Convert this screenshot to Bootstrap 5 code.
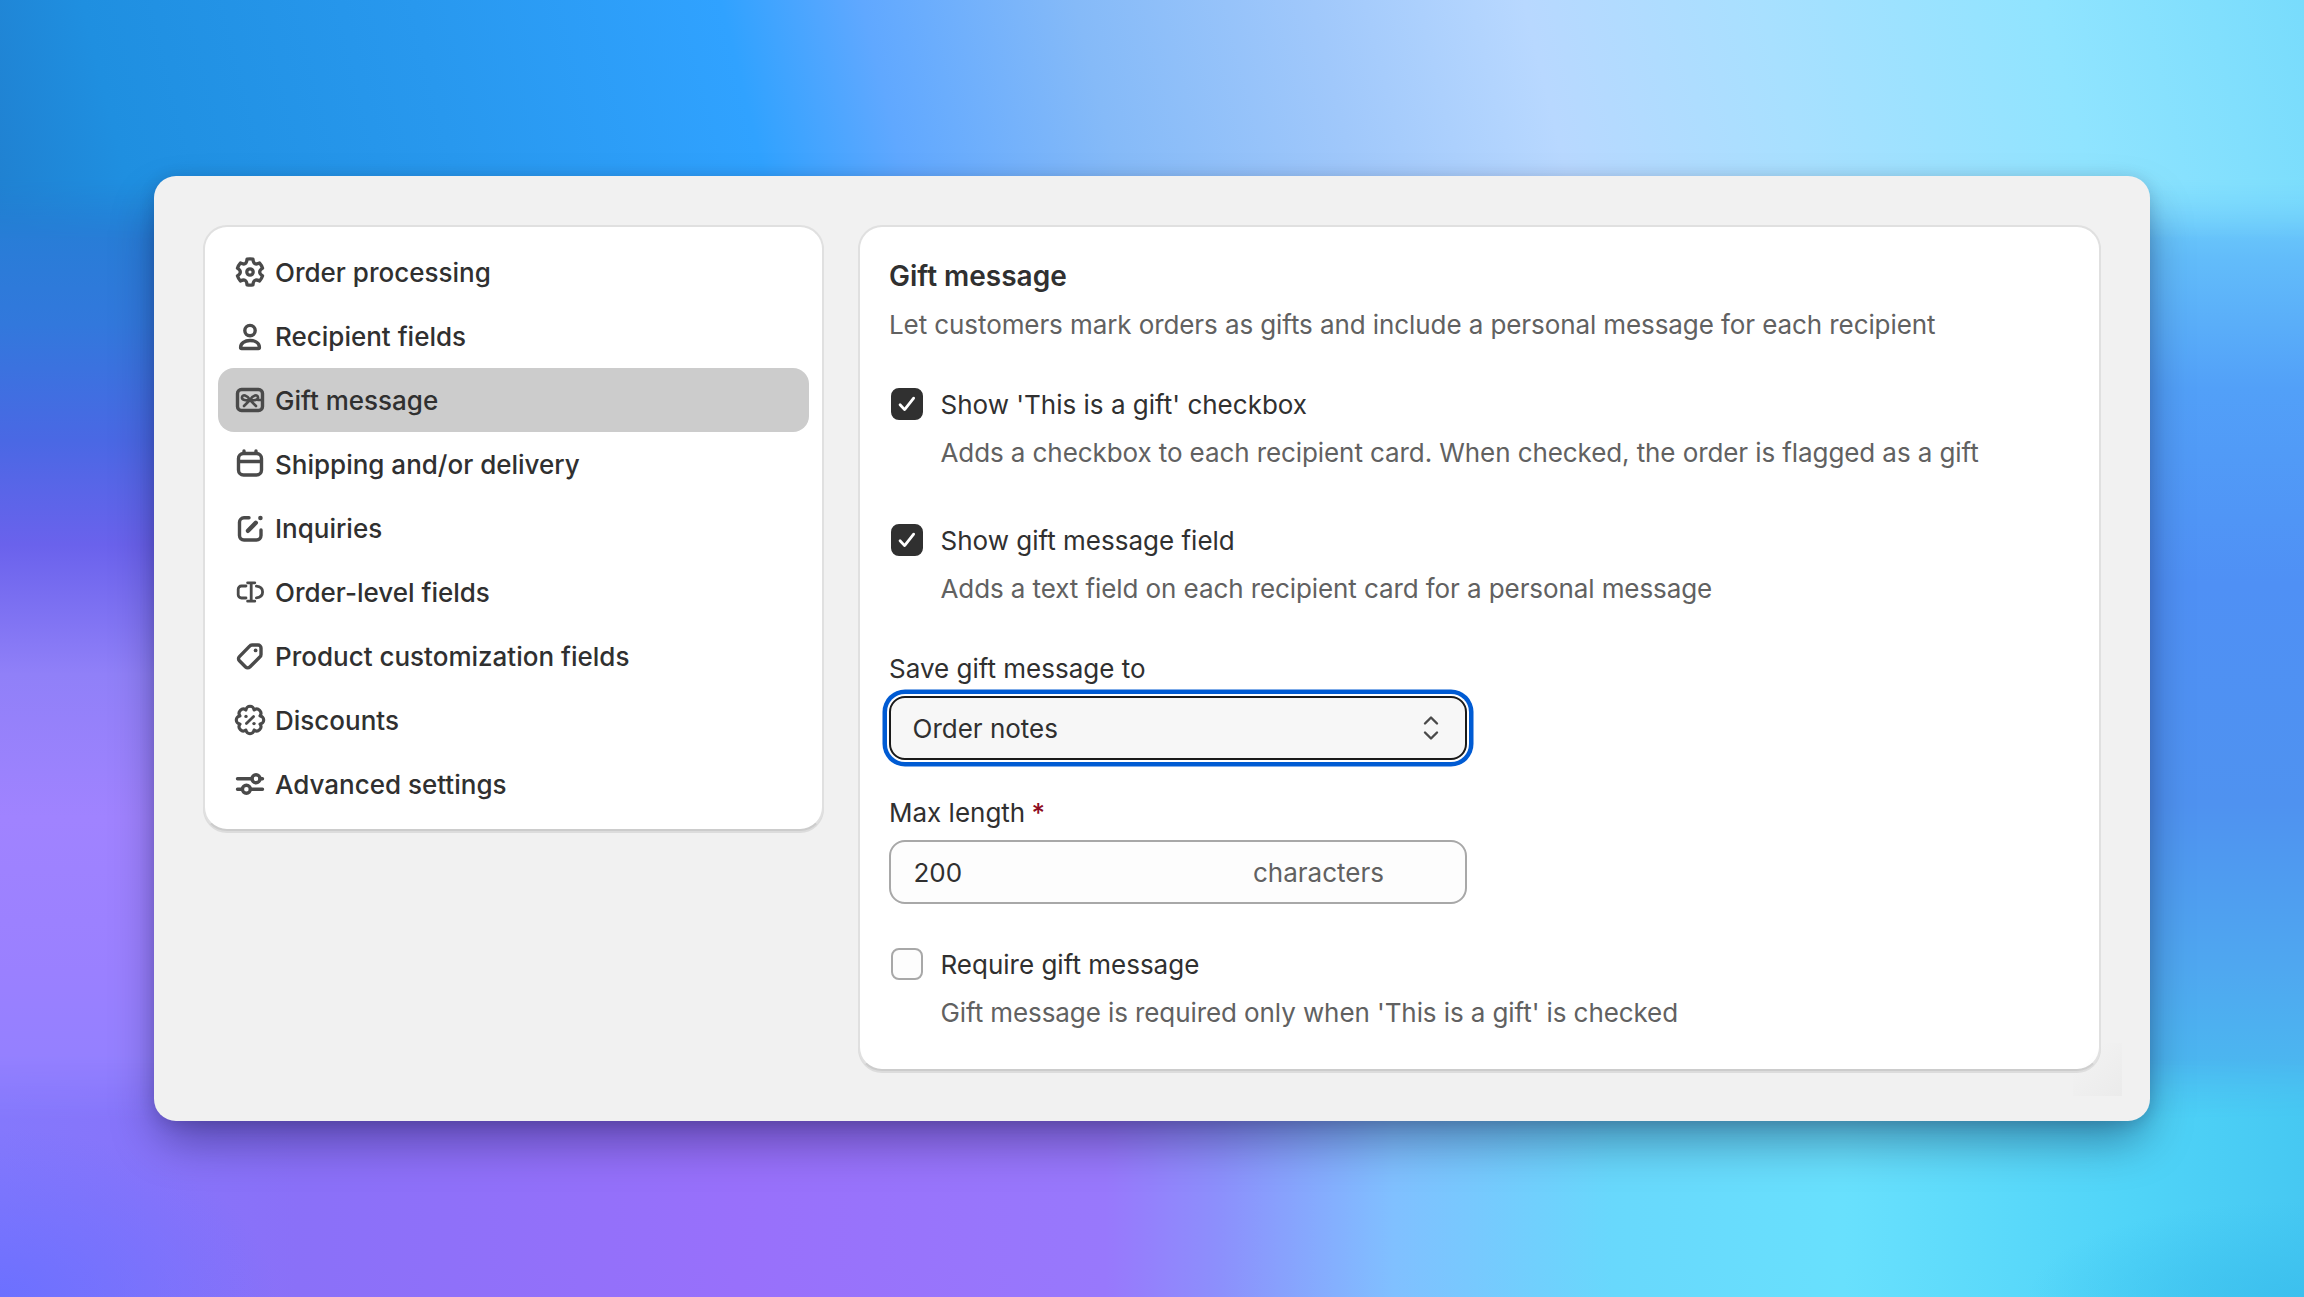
<!DOCTYPE html>
<html lang="en">
<head>
<meta charset="utf-8">
<title>Gift message</title>
<link rel="stylesheet" href="https://cdn.jsdelivr.net/npm/bootstrap@5.3.0/dist/css/bootstrap.min.css">
<style>
html,body{height:100%}
body{position:relative;margin:0;overflow:hidden;font-family:"Inter","Liberation Sans",sans-serif;font-size:26px;line-height:40px;color:#303030;
 background-color:#5a8cf0;background-repeat:no-repeat;background-size:50% 100%;background-position:left top,right top;
 background-image:
  linear-gradient(180deg,#1c7fd4 0%,#2280d4 14%,#3278dc 25%,#4a68e4 34%,#6a62ec 42%,#9080f8 52%,#a083ff 63%,#9a80ff 75%,#9080ff 87%,#7070ff 100%),
  linear-gradient(180deg,#88e2fc 0%,#74d6fc 14%,#62bcfa 20%,#52a0f8 30%,#4f90f5 45%,#4f92f0 62%,#4fa8f0 75%,#4abcf0 85%,#40c4f0 100%);
}
body::before,body::after{content:"";position:absolute;left:0;width:100%;z-index:0}
body::before{top:0;height:240px;background:linear-gradient(76deg,#2080d0 0%,#1f8fe0 6%,#2898ee 20%,#30a2ff 33%,#60a8ff 39%,#85baf8 48%,#a0c8fb 58%,#b8d8ff 67%,#a8e0ff 77%,#90e4ff 89%,#78dcfc 100%);-webkit-mask-image:linear-gradient(180deg,#000 74%,transparent 100%);mask-image:linear-gradient(180deg,#000 74%,transparent 100%)}
body::after{bottom:0;height:240px;background:radial-gradient(ellipse 12% 70% at 0% 100%,#6c70ff 0%,rgba(108,112,255,0) 100%),radial-gradient(ellipse 12% 40% at 100% 100%,#3cc0ee 0%,rgba(60,192,238,0) 100%),linear-gradient(90deg,#8478fc 0%,#8a70f8 13%,#9870fb 32%,#9878fc 48%,#8c90fc 53%,#80c0ff 60.5%,#68d8fc 70%,#68e0fd 80%,#50d4f8 92.5%,#46c8f2 100%);-webkit-mask-image:linear-gradient(0deg,#000 74%,transparent 100%);mask-image:linear-gradient(0deg,#000 74%,transparent 100%)}
.stage{position:relative;z-index:1;padding:176px 154px 0 154px}
.panel-shell{position:relative;width:1996px;height:945px;padding:49px;gap:34px;background:#f1f1f1;border-radius:22px;box-shadow:0 24px 48px -6px rgba(0,0,40,.4),0 2px 16px rgba(0,0,40,.14)}
.corner-tint{position:absolute;left:1919px;top:867px;width:49px;height:53px;background:linear-gradient(135deg,rgba(235,235,235,0) 30%,#ebebeb 100%)}
.side-card,.main-card{background:#fff;border:2px solid #e0e0e0;border-bottom-color:#cccccc;border-radius:24px;box-shadow:0 2px 0 #dcdcdc}
.side-card{width:621px;height:606px;padding:13px}
.main-card{width:1243px;height:846px;padding:28.5px 29px 0 29px}
.nav-row{height:64px;padding:0 11px 0 12px;gap:5px;border-radius:16px;font-weight:500;color:#303030;text-decoration:none}
.nav-row:hover{color:#303030}
.nav-row span{position:relative;top:1px}
.nav-row.is-on{background:#cccccc}
.nav-ico{width:40px;height:40px;flex:none;fill:none;stroke:#4a4a4a;stroke-width:1.7;stroke-linecap:round;stroke-linejoin:round}
.nav-ico .solid{fill:#4a4a4a;stroke:none}
.gm-title{font-size:28px;line-height:40px;font-weight:600;margin:0 0 9px}
.gm-sub{color:#616161;margin:0 0 40px;letter-spacing:-.09px}
.opt-row{gap:18px;height:40px;margin:0}
.gm-check.form-check-input{width:32px;height:32px;margin:-2px 0 0 1.5px;flex:none;float:none;border:2px solid #a8a8a8;border-radius:8px;background-color:#fdfdfd;box-shadow:none}
.gm-check.form-check-input:checked{background-color:#303030;border-color:#303030;background-size:24px 24px;background-image:url("data:image/svg+xml,%3csvg xmlns='http://www.w3.org/2000/svg' viewBox='0 0 18 18'%3e%3cpath fill='none' stroke='%23fff' stroke-width='2.1' stroke-linecap='round' stroke-linejoin='round' d='M3.8 9.6l3.4 3.6L14 4.6'/%3e%3c/svg%3e")}
.opt-label{margin:0;color:#303030}
.opt-help{color:#616161;margin:8px 0 0 51.5px;letter-spacing:-.09px}
.gap-a{margin-bottom:48px}
.gap-b{margin-bottom:40px}
.gap-c{margin-bottom:33px}
.gap-d{margin-bottom:41px}
.fld-label{display:block;margin:0 0 7px;color:#303030}
.req{color:#8e0b21;margin-left:-1px;font-weight:500}
.gm-select.form-select{width:578px;height:64px;padding:2px 60px 0 21.5px;font-size:26px;line-height:40px;color:#303030;background-color:#f7f7f7;border:2px solid #1a1a1a;border-radius:16px;box-shadow:0 0 0 2px #fff,0 0 0 6.5px #005bd3;background-position:right 24px center;background-size:20px 32px;background-image:url("data:image/svg+xml,%3csvg xmlns='http://www.w3.org/2000/svg' viewBox='0 0 20 32'%3e%3cpath fill='none' stroke='%234a4a4a' stroke-width='2.4' stroke-linecap='round' stroke-linejoin='round' d='M4 11.5l6-6 6 6M4 20.5l6 6 6-6'/%3e%3c/svg%3e")}
.suffix-field{width:578px;height:64px;border:2px solid #a8a8a8;border-radius:16px;background:#fdfdfd;padding:2px 81px 0 22.5px}
.suffix-field .form-control{border:0;background:transparent;box-shadow:none;padding:0;font-size:26px;line-height:40px;color:#303030;border-radius:0}
.suffix-text{color:#616161;flex:none}
</style>
</head>
<body>
<div class="stage">
 <div class="panel-shell d-flex align-items-start">
  <nav class="side-card d-flex flex-column flex-shrink-0">
   <a class="nav-row d-flex align-items-center" href="#"><svg class="nav-ico" viewBox="0 0 20 20"><g transform="translate(10 10) scale(.94) translate(-10 -10)"><path stroke-width="1.75" d="M8.42 3.18Q10 2.9 11.58 3.18Q11.8 6.88 15.12 5.23Q16.2 6.4 16.69 7.95Q13.6 10 16.69 12.05Q16.2 13.6 15.12 14.77Q11.8 13.12 11.58 16.82Q10 17.1 8.42 16.82Q8.2 13.12 4.88 14.77Q3.8 13.6 3.31 12.05Q6.4 10 3.31 7.95Q3.8 6.4 4.88 5.23Q8.2 6.88 8.42 3.18Z"/><circle cx="10" cy="10" r="1.7" stroke-width="1.75"/></g></svg><span>Order processing</span></a>
   <a class="nav-row d-flex align-items-center" href="#"><svg class="nav-ico" viewBox="0 0 20 20"><circle cx="10" cy="7.3" r="2.6"/><path d="M5.3 15.75c0-2.2 2.1-3.5 4.7-3.5s4.7 1.3 4.7 3.5c0 .3-.2.5-.5.5H5.8c-.3 0-.5-.2-.5-.5z"/></svg><span>Recipient fields</span></a>
   <a class="nav-row is-on d-flex align-items-center" href="#"><svg class="nav-ico" viewBox="0 0 20 20"><rect x="3.75" y="4.75" width="12.5" height="10.5" rx="2"/><path stroke-width="1.3" d="M10 10C8.6 7.6 6.2 7 6 8.6c-.2 1.5 2.2 1.7 4 1.4zM10 10c1.4-2.4 3.8-3 4-1.4.2 1.5-2.2 1.7-4 1.4zM10 10l-3 3M10 10l3 3M14 10h2"/></svg><span>Gift message</span></a>
   <a class="nav-row d-flex align-items-center" href="#"><svg class="nav-ico" viewBox="0 0 20 20"><rect x="4.25" y="4.75" width="11.5" height="10.75" rx="2.5"/><path d="M4.5 8.75h11M7 3.5v1.2M13 3.5v1.2"/></svg><span>Shipping and/or delivery</span></a>
   <a class="nav-row d-flex align-items-center" href="#"><svg class="nav-ico" viewBox="0 0 20 20"><path d="M9.5 4.9H7a2.25 2.25 0 0 0-2.25 2.25v6.6A2.25 2.25 0 0 0 7 16h6.25a2.25 2.25 0 0 0 2.25-2.25V11"/><path stroke-width="2.2" d="M9 11.4l3.9-4"/><circle class="solid" cx="15.2" cy="5" r="1.15"/></svg><span>Inquiries</span></a>
   <a class="nav-row d-flex align-items-center" href="#"><svg class="nav-ico" viewBox="0 0 20 20"><path stroke-width="1.4" d="M8 7H5.7a1.6 1.6 0 0 0-1.6 1.6v2.8A1.6 1.6 0 0 0 5.7 13H8M13.2 7.1c2 .2 3.1 1.2 3.1 2.9s-1.1 2.7-3.1 2.9M10.6 5.7v8.6M8.8 5.4h3.6M8.8 14.6h3.6"/></svg><span>Order-level fields</span></a>
   <a class="nav-row d-flex align-items-center" href="#"><svg class="nav-ico" viewBox="0 0 20 20"><path d="M11 4.5h3a1.5 1.5 0 0 1 1.5 1.5v3.2c0 .5-.2 1-.6 1.3l-5 5c-.6.6-1.5.6-2.1 0l-3.1-3.1c-.6-.6-.6-1.5 0-2.1l5-5.1c.3-.4.8-.7 1.3-.7z"/><circle class="solid" cx="12.8" cy="7.2" r=".95"/></svg><span>Product customization fields</span></a>
   <a class="nav-row d-flex align-items-center" href="#"><svg class="nav-ico" viewBox="0 0 20 20"><path stroke-width="1.55" d="M12.07 5.01A2.08 2.08 0 0 1 14.99 7.93A2.08 2.08 0 0 1 14.99 12.07A2.08 2.08 0 0 1 12.07 14.99A2.08 2.08 0 0 1 7.93 14.99A2.08 2.08 0 0 1 5.01 12.07A2.08 2.08 0 0 1 5.01 7.93A2.08 2.08 0 0 1 7.93 5.01A2.08 2.08 0 0 1 12.07 5.01Z"/><path stroke-width="1.4" d="M8.2 11.8l3.6-3.6"/><circle class="solid" cx="8" cy="8.2" r=".85"/><circle class="solid" cx="12" cy="11.8" r=".85"/></svg><span>Discounts</span></a>
   <a class="nav-row d-flex align-items-center" href="#"><svg class="nav-ico" viewBox="0 0 20 20"><path d="M3.75 7.4H11M15 7.4h1.25M3.75 12.6h2.4M10.2 12.6h6.05"/><circle cx="13" cy="7.4" r="2"/><circle cx="8.2" cy="12.6" r="2"/></svg><span>Advanced settings</span></a>
  </nav>
  <main class="main-card flex-shrink-0">
   <h2 class="gm-title">Gift message</h2>
   <p class="gm-sub">Let customers mark orders as gifts and include a personal message for each recipient</p>
   <div class="gap-a">
    <div class="opt-row d-flex align-items-center"><input class="gm-check form-check-input" type="checkbox" id="c1" checked><label class="opt-label" for="c1">Show 'This is a gift' checkbox</label></div>
    <div class="opt-help">Adds a checkbox to each recipient card. When checked, the order is flagged as a gift</div>
   </div>
   <div class="gap-b">
    <div class="opt-row d-flex align-items-center"><input class="gm-check form-check-input" type="checkbox" id="c2" checked><label class="opt-label" for="c2">Show gift message field</label></div>
    <div class="opt-help">Adds a text field on each recipient card for a personal message</div>
   </div>
   <div class="gap-c">
    <label class="fld-label" for="s1">Save gift message to</label>
    <select class="gm-select form-select" id="s1"><option>Order notes</option></select>
   </div>
   <div class="gap-d">
    <label class="fld-label" for="i1">Max length <span class="req">*</span></label>
    <div class="suffix-field d-flex align-items-center"><input class="form-control" id="i1" type="text" value="200"><span class="suffix-text">characters</span></div>
   </div>
   <div>
    <div class="opt-row d-flex align-items-center"><input class="gm-check form-check-input" type="checkbox" id="c3"><label class="opt-label" for="c3">Require gift message</label></div>
    <div class="opt-help">Gift message is required only when 'This is a gift' is checked</div>
   </div>
  </main>
  <div class="corner-tint"></div>
 </div>
</div>
<script src="https://cdn.jsdelivr.net/npm/bootstrap@5.3.0/dist/js/bootstrap.bundle.min.js"></script>
</body>
</html>
